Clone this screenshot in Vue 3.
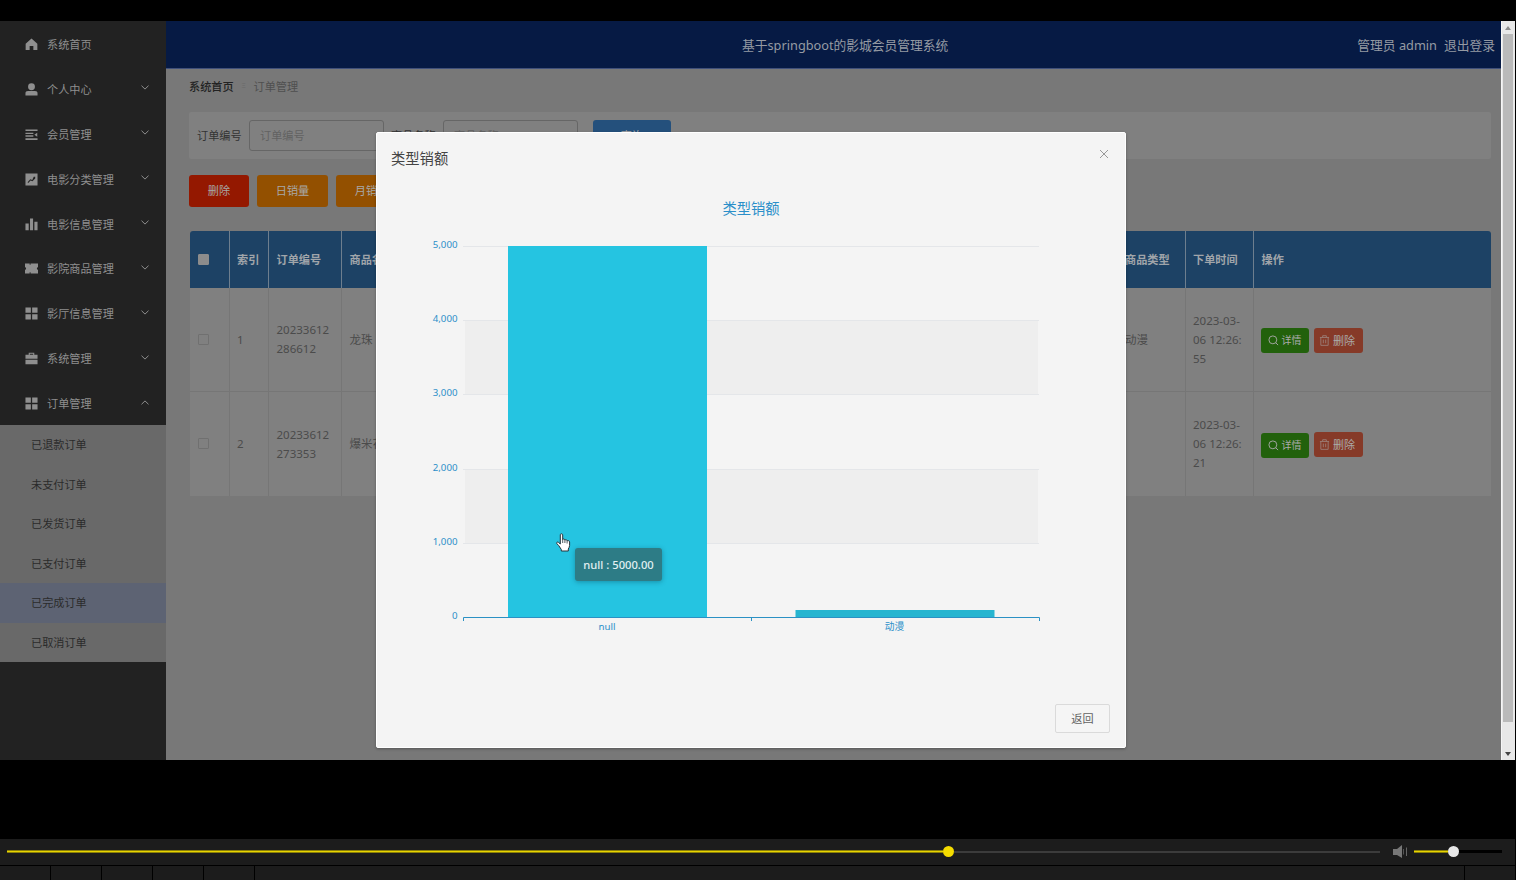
<template>
  <div class="player">
    <div class="screen">
      <aside class="sidebar">
        <div v-for="item in menus" :key="item.name" class="menu-item">
          <svg class="menu-icon" viewBox="0 0 14 14">
            <path :d="icons[item.icon]" fill="currentColor" fill-rule="evenodd" />
          </svg>
          <span class="menu-name">{{ item.name }}</span>
          <svg v-if="item.arrow" class="arrow" :class="{ open: item.open }" viewBox="0 0 8 5">
            <path d="M0.5 0.7L4 4.1L7.5 0.7" fill="none" stroke="currentColor" />
          </svg>
        </div>
        <div class="submenu">
          <div
            v-for="name in orders"
            :key="name"
            :class="['submenu-item', { active: name === activeOrder }]"
          >
            {{ name }}
          </div>
        </div>
      </aside>

      <main class="main">
        <header class="header">
          <h1>基于springboot的影城会员管理系统</h1>
          <div class="user">
            <span>管理员 admin</span>
            <span>退出登录</span>
          </div>
        </header>
        <div class="content">
          <div class="breadcrumb">
            <b>系统首页</b>
            <i>Ξ</i>
            <span>订单管理</span>
          </div>
          <div class="search">
            <label>订单编号</label>
            <div class="input">订单编号</div>
            <label>商品名称</label>
            <div class="input">商品名称</div>
            <button class="query">查询</button>
          </div>
          <div class="actions">
            <button class="btn-delete">删除</button>
            <button>日销量</button>
            <button>月销量</button>
          </div>
          <div class="table">
            <div class="row head">
              <div class="cell"><span class="checkbox"></span></div>
              <div v-for="title in columns" :key="title" class="cell">{{ title }}</div>
            </div>
            <div v-for="(row, index) in rows" :key="row.no" class="row">
              <div class="cell"><span class="checkbox"></span></div>
              <div class="cell">{{ index + 1 }}</div>
              <div class="cell">{{ row.no }}</div>
              <div class="cell">{{ row.goods }}</div>
              <div class="cell">{{ row.type }}</div>
              <div class="cell">{{ row.time }}</div>
              <div class="cell ops">
                <button class="detail">
                  <svg viewBox="0 0 12 12">
                    <path d="M5.3 1a4.3 4.3 0 1 0 0 8.6a4.3 4.3 0 0 0 0-8.6M8.4 8.4L11 11" />
                  </svg>
                  详情
                </button>
                <button class="remove">
                  <svg viewBox="0 0 12 12">
                    <path d="M1 2.7H11M4 2.5V.8H8V2.5M2 2.7V11.3H10V2.7M4.7 5V9M7.3 5V9" />
                  </svg>
                  删除
                </button>
              </div>
            </div>
          </div>
        </div>

        <div class="dialog">
          <div class="dialog-header">
            <span>类型销额</span>
            <svg class="close" viewBox="0 0 10 10">
              <path d="M1 1L9 9M9 1L1 9" fill="none" stroke="#999" />
            </svg>
          </div>
          <svg class="chart" viewBox="0 0 720 500">
            <text x="360" y="32" class="chart-title">类型销额</text>
            <rect x="74" y="138.5" width="573" height="74" fill="#eeeeee" />
            <rect x="74" y="287" width="573" height="74" fill="#eeeeee" />
            <g v-for="(tick, i) in ticks" :key="tick">
              <path v-if="i < 5" :d="`M72 ${tickY(i)}H648`" stroke="#e4e6e9" />
              <text x="66.5" :y="tickY(i) + 1.8" class="tick">{{ tick }}</text>
            </g>
            <rect
              v-for="bar in bars"
              :key="bar.name"
              :x="bar.x"
              :y="435 - bar.height"
              width="199"
              :height="bar.height"
              :fill="bar.color"
            />
            <path class="axis" d="M72.5 439V435.5H648.5V439M360.5 435V439" />
            <text
              v-for="bar in bars"
              :key="bar.name"
              :x="bar.x + 99"
              y="448.4"
              class="label"
            >{{ bar.name }}</text>
          </svg>
          <div class="dialog-footer">
            <button>返回</button>
          </div>
          <div class="tooltip">null : 5000.00</div>
          <svg class="cursor" viewBox="0 0 15 19">
            <path
              d="M4.3 1.5C5 .4 6.5.7 6.7 1.8V6.3C7.4 5.7 8.7 6 8.9 7C9.8 6.4 11 6.8 11.1 7.8C12.1 7.2 13.6 7.8 13.6 9V12.5C13.6 14 12.8 14.8 12.3 16V18H5.3V16.5L2.8 12.7L.9 10.7C.1 9.5 1.3 8.6 2.4 9.3L4.3 11Z"
              fill="#fff"
              stroke="#26333b"
            />
            <path d="M6.7 6V10M8.9 7V10M11.1 8V10.5" stroke="#26333b" stroke-width=".8" />
          </svg>
        </div>
      </main>

      <div class="scrollbar">
        <svg viewBox="0 0 6 4"><path d="M0 4L3 0L6 4Z" fill="#8c8c8c" /></svg>
        <div class="thumb"></div>
        <svg viewBox="0 0 6 4"><path d="M0 0L3 4L6 0Z" fill="#444" /></svg>
      </div>
    </div>

    <div class="controls">
      <div class="progress">
        <div class="played"></div>
        <div class="knob"></div>
        <div class="rest"></div>
      </div>
      <svg class="speaker" viewBox="0 0 15 14">
        <path d="M0 4H4L9 0V13L4 10H0Z" fill="#777" />
        <path d="M10.5 4V9.5" stroke="#555" />
        <path d="M13.5 2.5V11" stroke="#666" />
      </svg>
      <div class="volume">
        <div class="played"></div>
        <div class="knob"></div>
        <div class="rest"></div>
      </div>
    </div>
    <div class="toolbar">
      <div v-for="n in 5" :key="n" class="slot"></div>
      <div class="slot wide"></div>
      <div class="slot last"></div>
    </div>
  </div>
</template>

<script setup>
const icons = {
  home: 'M7 .5L13.3 6.3V13H9V8.5H5V13H.7V6.3Z',
  user: 'M7 .3a3.7 3.7 0 1 0 0 7.4a3.7 3.7 0 0 0 0-7.4ZM.5 13.5V11Q.5 8.5 3.3 8.5H10.7Q13.5 8.5 13.5 11V13.5Z',
  list: 'M.5 1.5H13.5V3.3H.5ZM.5 5H9V6.5H.5ZM.5 7.9H9V9.4H.5ZM.5 11H13.5V12.8H.5ZM10 7.2L13.2 5V9.4Z',
  chart: 'M.5 .5H13.5V13.5H.5ZM2.8 10L3.5 10.7L6 8L8 9L11 5.8V4H9.4L7.8 7.5L5.7 6.6Z',
  bars: 'M.5 6H4V13.3H.5ZM5.4 .5H8.7V13.3H5.4ZM10.1 4H13.5V13.3H10.1Z',
  ticket: 'M0 1.7H5V3H6V1.7H14V5.3Q11.5 7 14 8.7V12.3H6V11H5V12.3H0V8.7Q2.5 7 0 5.3Z',
  grid: 'M.5 .5H6.3V6.3H.5ZM7.7 .5H13.5V6.3H7.7ZM.5 7.7H6.3V13.5H.5ZM7.7 7.7H13.5V13.5H7.7Z',
  bag: 'M4 3V.7H10V3H13.5V7.3H.5V3ZM5.2 3H8.8V2H5.2ZM.5 8.3H13.5V13.3H.5Z'
}

const menus = [
  { name: '系统首页', icon: 'home' },
  { name: '个人中心', icon: 'user', arrow: true },
  { name: '会员管理', icon: 'list', arrow: true },
  { name: '电影分类管理', icon: 'chart', arrow: true },
  { name: '电影信息管理', icon: 'bars', arrow: true },
  { name: '影院商品管理', icon: 'ticket', arrow: true },
  { name: '影厅信息管理', icon: 'grid', arrow: true },
  { name: '系统管理', icon: 'bag', arrow: true },
  { name: '订单管理', icon: 'grid', arrow: true, open: true }
]

const orders = ['已退款订单', '未支付订单', '已发货订单', '已支付订单', '已完成订单', '已取消订单']
const activeOrder = '已完成订单'

const columns = ['索引', '订单编号', '商品名称', '商品类型', '下单时间', '操作']
const rows = [
  { no: '20233612286612', goods: '龙珠', type: '动漫', time: '2023-03-06 12:26:55' },
  { no: '20233612273353', goods: '爆米花', type: '', time: '2023-03-06 12:26:21' }
]

const ticks = ['5,000', '4,000', '3,000', '2,000', '1,000', '0']
const tickY = i => Math.round(64 + i * 74.2) + 0.5

const bars = [
  { name: 'null', x: 117, height: 371, color: '#25c4e1' },
  { name: '动漫', x: 404.5, height: 7, color: '#26b5d0' }
]
</script>

<style>
body {
  margin: 0;
  background: #000;
  overflow: hidden;
}
</style>

<style scoped>
.player {
  width: 1516px;
  height: 880px;
  padding-top: 21px;
  box-sizing: border-box;
  background: #000;
  font-family: "Noto Sans", "Noto Sans CJK SC", sans-serif;
  font-size: 11.15px;
  display: flex;
  flex-direction: column;
}

.player * {
  box-sizing: border-box;
}

button {
  font: inherit;
  border: 0;
  padding: 0;
}

.screen {
  display: flex;
  height: 739px;
  margin-bottom: 79px;
}

.sidebar {
  width: 166px;
  background: #222;
  color: #8f8f8f;
  box-shadow: 1px 0 4px rgba(0, 0, 0, 0.25);
  position: relative;
}

.menu-item {
  height: 44.9px;
  padding: 1px 17px 0 25px;
  display: flex;
  align-items: center;
}

.menu-icon {
  width: 13px;
  height: 13px;
  margin: 1px 9px 0 0;
}

.menu-name {
  flex: 1;
}

.arrow {
  width: 8px;
  height: 5px;
  margin-top: -2px;
}

.arrow.open {
  transform: rotate(180deg);
}

.submenu {
  background: #696969;
  color: #2b2b2b;
}

.submenu-item {
  height: 39.5px;
  padding-left: 31px;
  line-height: 39.5px;
}

.submenu-item.active {
  background: #5d6373;
}

.main {
  position: relative;
  width: 1335px;
  background: #787878;
}

.header {
  height: 48px;
  padding: 0 6px 0 0;
  display: flex;
  align-items: center;
  background: #061a44;
  border-bottom: 1px solid #40507a;
  color: #959aa3;
  font-size: 12.75px;
}

.header h1 {
  font-size: inherit;
  font-weight: normal;
  margin: 0 0 0 576px;
}

.user {
  margin-left: auto;
  display: flex;
  gap: 7px;
}

.content {
  padding: 0 10px 0 23px;
}

.breadcrumb {
  height: 43px;
  padding-bottom: 10px;
  display: flex;
  align-items: center;
  color: #4f4f4f;
}

.breadcrumb b {
  color: #222;
  font-weight: 500;
}

.breadcrumb i {
  width: 20px;
  color: #696969;
  font-size: 7px;
  font-style: normal;
  text-align: center;
}

.search {
  height: 47px;
  padding: 0 8px;
  border-radius: 2px;
  display: flex;
  align-items: center;
  background: #808080;
  color: #333;
}

.search label {
  width: 52px;
  padding-bottom: 1px;
}

.input {
  width: 135px;
  height: 31px;
  margin-right: 7px;
  padding-left: 10px;
  border: 1px solid #666;
  border-radius: 3px;
  line-height: 29px;
  color: #626262;
}

.query {
  width: 78px;
  height: 31px;
  margin-left: 8px;
  padding-bottom: 2px;
  border-radius: 3px;
  background: #24507c;
  color: #aaa;
}

.actions {
  display: flex;
  gap: 8px;
  margin: 16px 0 24px;
}

.actions button {
  width: 71px;
  height: 32px;
  padding-bottom: 2px;
  border-radius: 3px;
  background: #935000;
  color: #a8a8a8;
}

.actions .btn-delete {
  width: 60px;
  background: #941800;
}

.table {
  width: 1301px;
  margin-left: 1px;
  border-radius: 3px 3px 0 0;
  overflow: hidden;
  background: #808080;
  color: #4b4b4b;
}

.row {
  display: grid;
  grid-template-columns: 39.5px 39.5px 73px 775.5px 68px 68.5px 237px;
  height: 104px;
}

.row.head {
  height: 57px;
  background: #1d4265;
  color: #a0a5aa;
  font-weight: 600;
}

.cell {
  padding: 0 8px 1px 7.5px;
  display: flex;
  align-items: center;
  border-right: 1px solid #767676;
  border-bottom: 1px solid #767676;
  line-height: 19px;
  font-size: 11.5px;
  word-break: break-all;
}

.head .cell {
  border-color: #6d7e8e;
  border-bottom: 0;
  padding-bottom: 0;
  font-size: 11.15px;
}

.cell:last-child {
  border-right: 0;
}

.row:last-child .cell {
  border-bottom: 0;
}

.checkbox {
  width: 11px;
  height: 11px;
  border: 1px solid #707070;
  border-radius: 1px;
}

.head .checkbox {
  background: #8c8c8c;
  border-color: #8c8c8c;
}

.ops {
  gap: 5px;
  padding: 1px 0 0 7px;
}

.ops button {
  height: 25px;
  display: flex;
  align-items: center;
  justify-content: center;
  gap: 3px;
  border-radius: 3px;
  color: #aaa;
  font-size: 10px;
}

.ops svg {
  width: 11px;
  height: 11px;
  fill: none;
  stroke: currentColor;
}

.ops .detail {
  width: 48px;
  margin-top: 1px;
  padding-right: 1px;
  background: #22610c;
}

.ops .remove {
  width: 49px;
  padding-right: 3px;
  background: #863a28;
  font-size: 11px;
}

.remove svg {
  opacity: 0.6;
}

.dialog {
  position: absolute;
  left: 210px;
  top: 111px;
  width: 750px;
  height: 616px;
  padding: 0 15px 0 14px;
  background: #f4f4f4;
  border: 1px solid #fff;
  border-radius: 2px;
  box-shadow: 0 1px 3px rgba(0, 0, 0, 0.3);
}

.dialog-header {
  height: 49px;
  display: flex;
  justify-content: space-between;
  align-items: center;
  color: #444;
  font-size: 14.3px;
}

.close {
  width: 10px;
  height: 10px;
  margin: -8px 1px 0 0;
}

.chart {
  display: block;
  width: 720px;
  height: 500px;
}

.chart-title {
  font-size: 14.3px;
  fill: #2b8fc9;
  text-anchor: middle;
}

.axis {
  fill: none;
  stroke: #2b91c4;
}

.tick {
  font-size: 9.7px;
  fill: #2b8fc9;
  text-anchor: end;
}

.label {
  font-size: 9.7px;
  fill: #2b8fc9;
  text-anchor: middle;
}

.dialog-footer {
  display: flex;
  justify-content: flex-end;
  padding-top: 22px;
}

.dialog-footer button {
  width: 55px;
  height: 29px;
  padding-bottom: 2px;
  border: 1px solid #dadada;
  border-radius: 2px;
  background: #f5f5f5;
  color: #626262;
}

.tooltip {
  position: absolute;
  left: 198px;
  top: 415px;
  width: 87px;
  height: 33px;
  border-radius: 3px;
  background: #2d7c86;
  box-shadow: 0 1px 5px rgba(0, 60, 80, 0.4);
  color: #e2f0f2;
  font-size: 11.2px;
  font-weight: 500;
  line-height: 33px;
  text-align: center;
}

.cursor {
  position: absolute;
  left: 179px;
  top: 400px;
  width: 15px;
  height: 19px;
}

.scrollbar {
  width: 14px;
  padding: 5px 2px 4px 1px;
  background: #e8e8e8;
  border-left: 1px solid #f6f6f6;
  display: flex;
  flex-direction: column;
  align-items: center;
}

.scrollbar svg {
  width: 6px;
  height: 4px;
}

.thumb {
  width: 10px;
  height: 688px;
  margin: 4px 0 auto;
  background: #bababa;
}

.controls {
  height: 26px;
  margin-right: 1px;
  padding: 0 13px 1px 7px;
  display: flex;
  align-items: center;
  background: #1c1c1c;
}

.progress {
  width: 1373px;
  display: flex;
  align-items: center;
}

.played {
  height: 3px;
  background: #e8d400;
  border: solid #8b8008;
  border-width: 1px 0;
}

.progress .played {
  width: 936px;
}

.knob {
  width: 11px;
  height: 11px;
  border-radius: 50%;
  background: #f5dc00;
}

.rest {
  flex: 1;
  height: 2px;
  background: #3c3c3c;
}

.speaker {
  width: 15px;
  height: 14px;
  margin: 0 6px 0 13px;
}

.volume {
  width: 88px;
  display: flex;
  align-items: center;
}

.volume .played {
  width: 34px;
}

.volume .knob {
  background: #e8e8e8;
}

.volume .rest {
  height: 3px;
  background: #000;
}

.toolbar {
  height: 14px;
  margin: 1px 1px 0 0;
  display: flex;
  gap: 1px;
}

.slot {
  width: 50px;
  background: #1c1c1c;
}

.slot.wide {
  flex: 1;
}
</style>
